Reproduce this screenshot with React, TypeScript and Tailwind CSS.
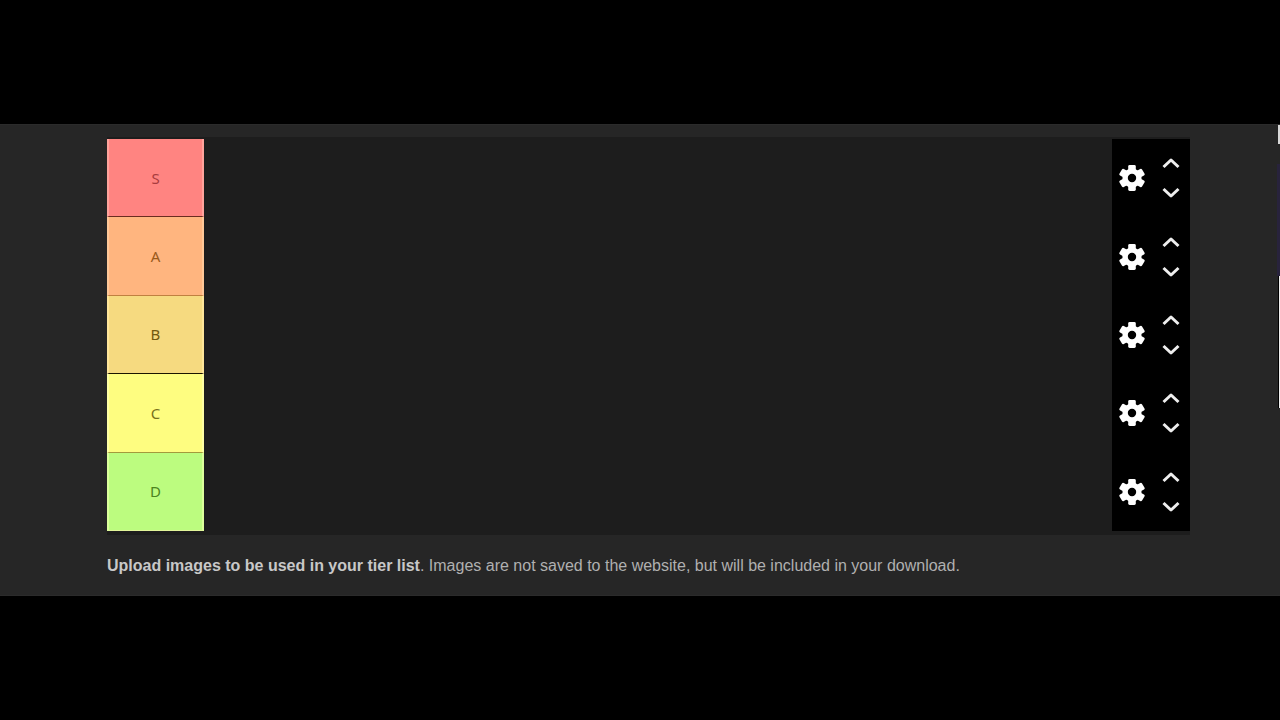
const tiers = [
  { name: "S", cell: "bg-[#ff8481] border-x-[#ffa39c] border-b-[#6a2c20] text-[#a83c3e]" },
  { name: "A", cell: "bg-[#ffb57f] border-x-[#ffc898] border-b-[#c08040] text-[#9a5a1c]" },
  { name: "B", cell: "bg-[#f6da80] border-x-[#ffe69a] border-b-[#1a1400] text-[#71590f]" },
  { name: "C", cell: "bg-[#fefd80] border-x-[#ffffa4] border-b-[#a39a3c] text-[#77711c]" },
  { name: "D", cell: "bg-[#bcfc7f] border-x-[#dcff9c] border-b-[#e2f59a] text-[#4c841e]" },
];

const toothAngles = [0, 60, 120, 180, 240, 300];

function GearIcon() {
  return (
    <svg width="26" height="26" viewBox="0 0 26 26" aria-hidden="true">
      <circle cx="13" cy="13" r="6.9" fill="none" stroke="currentColor" strokeWidth="5.4" />
      {toothAngles.map((angle) => (
        <rect
          key={angle}
          x="9.2"
          y="0"
          width="7.6"
          height="8"
          rx="1.4"
          fill="currentColor"
          transform={`rotate(${angle} 13 13)`}
        />
      ))}
    </svg>
  );
}

function Chevron({ points }: { points: string }) {
  return (
    <svg width="18" height="12" viewBox="0 0 18 12" fill="none" aria-hidden="true">
      <polyline points={points} stroke="currentColor" strokeWidth="3" strokeLinejoin="round" />
    </svg>
  );
}

function TierRow({ name, cell }: { name: string; cell: string }) {
  return (
    <div className="flex">
      <div
        className={`flex w-[97px] shrink-0 items-center justify-center border-x-2 border-b font-['Noto_Sans',sans-serif] text-[15px] leading-5 ${cell}`}
      >
        {name}
      </div>
      <div className="flex-1" />
      <div className="flex w-[78px] shrink-0 items-center bg-black text-white">
        <button type="button" aria-label={`Settings for tier ${name}`} className="flex w-[39px] justify-center">
          <GearIcon />
        </button>
        <div className="flex flex-1 flex-col items-center">
          <button type="button" aria-label={`Move tier ${name} up`} className="flex h-[30px] items-center text-[#eeeeee]">
            <Chevron points="1.5,10 9,3 16.5,10" />
          </button>
          <button type="button" aria-label={`Move tier ${name} down`} className="flex h-[30px] items-center text-[#eeeeee]">
            <Chevron points="1.5,2 9,9 16.5,2" />
          </button>
        </div>
      </div>
    </div>
  );
}

export default function App() {
  return (
    <div className="flex min-h-screen flex-col justify-center overflow-hidden bg-black font-['Liberation_Sans',sans-serif]">
      <main className="relative border-y border-[#2b2b2b] bg-[#262626] pt-3 pr-[90px] pb-[19px] pl-[107px]">
        <section aria-label="Tier list" className="bg-[#1d1d1d] pt-0.5 pb-1">
          <div className="grid min-h-[392px] grid-rows-5">
            {tiers.map((tier) => (
              <TierRow key={tier.name} {...tier} />
            ))}
          </div>
        </section>
        <p className="mt-[21px] text-base leading-5 text-[#b0b0b0]">
          <strong className="text-[#c8c8c8]">Upload images to be used in your tier list</strong>. Images are not saved to
          the website, but will be included in your download.
        </p>
        <div aria-hidden="true" className="absolute top-0 right-0 flex w-[3px] flex-col items-end">
          <div className="h-[19px] w-0.5 bg-[#d8d8d8]" />
          <div className="mt-5 h-[112px] w-full bg-[#28233c]" />
          <div className="h-[132px] w-0.5 border-l border-black bg-[#eeeeee]" />
        </div>
      </main>
    </div>
  );
}
